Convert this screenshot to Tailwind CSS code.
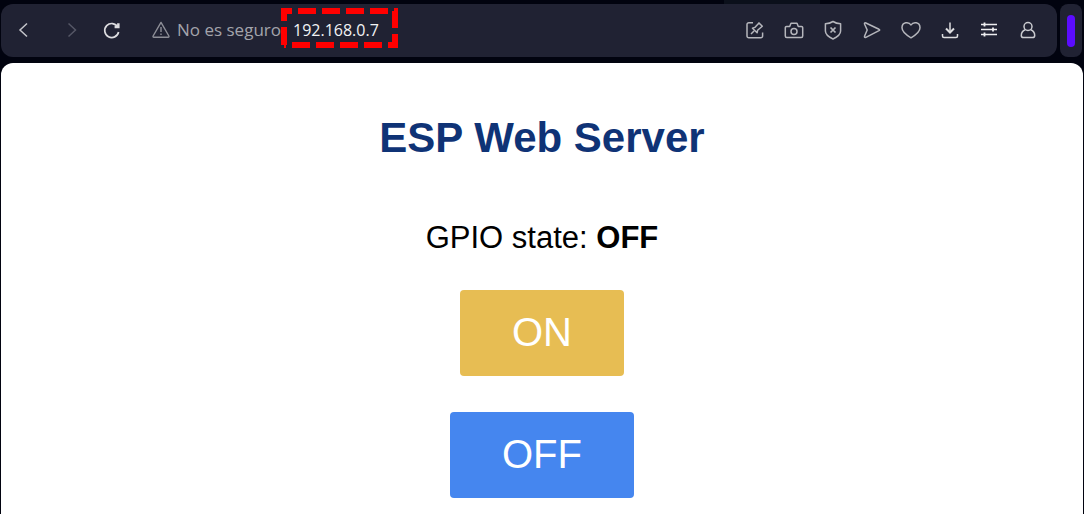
<!DOCTYPE html>
<html lang="es">
<head>
<meta charset="utf-8">
<meta name="viewport" content="width=device-width, initial-scale=1">
<title>ESP Web Server</title>
<script src="https://cdn.jsdelivr.net/npm/@tailwindcss/browser@4"></script>
</head>
<body class="flex min-h-screen flex-col overflow-x-hidden bg-[#01030f]">
<div class="flex h-1 justify-center pl-[460px]"><div class="w-24 bg-[#0b101b]"></div></div>
<header class="flex h-[53px] gap-[3px] pr-0.5 pl-px">
  <div class="flex flex-1 items-center rounded-xl bg-[#202233] pr-2.5 pb-px pl-[7px] text-[#c4c5ca]">
    <nav class="flex items-center" aria-label="Navegación">
      <button aria-label="Atrás" class="grid size-8 place-items-center"><svg class="size-5" viewBox="0 0 20 20" fill="none" stroke="currentColor" stroke-width="1.5"><path d="M13 3.500 6 10l7 6.500"/></svg></button>
      <button aria-label="Adelante" class="ml-4 grid size-8 place-items-center text-[#555766]"><svg class="size-5" viewBox="0 0 20 20" fill="none" stroke="currentColor" stroke-width="1.5"><path d="m6.500 3.500 7 6.500-7 6.500"/></svg></button>
      <button aria-label="Recargar" class="ml-2 grid size-8 place-items-center text-[#dddde0]"><svg class="size-5" viewBox="0 0 20 20" fill="none" stroke="currentColor" stroke-width="1.7"><path d="M15.8 7A7 7 0 1 0 16.6 12"/><path d="M17.6 3.200v5h-5V5.500h2.500V3.200Z" fill="currentColor" stroke="none"/></svg></button>
    </nav>
    <div class="ml-[23px] flex items-center font-['Open_Sans','Noto_Sans',sans-serif]">
      <svg class="size-5 text-[#8d8e97]" viewBox="0 0 20 20" fill="none" stroke="currentColor" stroke-width="1.4" stroke-linejoin="round"><path d="M10 2.4 17.9 16a.8.8 0 0 1-.7 1.2H2.8A.8.8 0 0 1 2.1 16Z"/><path d="M10 7v5m0 1.5V15"/></svg>
      <span class="ml-1.5 text-[17px] leading-6 text-[#a3a4ab]">No es seguro</span>
      <a href="#" class="relative ml-3 text-base leading-6 font-medium text-[#f2f2f4]">192.168.0.7
        <svg class="absolute -top-2.5 -left-3 h-10 w-[117px]" viewBox="0 0 117 40" fill="none" stroke="#ff0000" stroke-width="6" stroke-dasharray="18 6"><path d="M3 37V3H114V37H3"/></svg>
      </a>
    </div>
    <div class="ml-auto flex items-center text-[#b5b6bc]">
      <button aria-label="Notas" class="grid h-8 w-[39px] place-items-center"><svg class="size-5" viewBox="0 0 20 20" fill="none" stroke="currentColor" stroke-width="1.5" stroke-linejoin="round"><path d="M8 2.8H3.8A1.8 1.8 0 0 0 2 4.600V16a1.800 1.800 0 0 0 1.800 1.800h12A1.800 1.800 0 0 0 17.600 16v-3.500M6 14l3-3M7.500 8.200l4.600 4.600.5-2.500 4.700-4-3.300-3.400-4.200 4.500Z"/></svg></button>
      <button aria-label="Captura" class="grid h-8 w-[39px] place-items-center"><svg class="size-5" viewBox="0 0 20 20" fill="none" stroke="currentColor" stroke-width="1.5" stroke-linejoin="round"><path d="M2.500 6.500h3.200L7 3.200h6l1.300 3.300h3.200A1.200 1.200 0 0 1 18.700 7.700V16a1.500 1.500 0 0 1-1.500 1.500H2.800A1.500 1.500 0 0 1 1.300 16V7.700A1.200 1.200 0 0 1 2.500 6.500Z"/><circle cx="10" cy="11.500" r="3"/></svg></button>
      <button aria-label="Protección" class="grid h-8 w-[39px] place-items-center"><svg class="size-5" viewBox="0 0 20 20" fill="none" stroke="currentColor" stroke-width="1.5" stroke-linejoin="round"><path d="M10 1.500c2.300 1.500 4.700 2.100 7.600 2.200V11c0 3.700-3.300 6-7.600 8-4.300-2-7.600-4.300-7.600-8V3.700c2.900-.1 5.300-.7 7.600-2.200Z"/><path d="m7.500 7.500 5 5m0-5-5 5" stroke-width="1.700"/></svg></button>
      <button aria-label="Enviar" class="grid h-8 w-[39px] place-items-center"><svg class="size-5" viewBox="0 0 20 20" fill="none" stroke="currentColor" stroke-width="1.5" stroke-linejoin="round"><path d="M3.900 3 17 9.300q1.300.7 0 1.400L3.900 17.300q-1.900.6-1.300-1.300L5.200 10 2.600 4.300Q2 2.400 3.900 3Z"/></svg></button>
      <button aria-label="Favoritos" class="grid h-8 w-[39px] place-items-center"><svg class="size-5" viewBox="0 0 20 20" fill="none" stroke="currentColor" stroke-width="1.5" stroke-linejoin="round"><path d="M10 5C8 1.500 1 1.600 1 7.800c0 4 4.700 7.500 9 10 4.300-2.500 9-6 9-10C19 1.600 12 1.500 10 5Z"/></svg></button>
      <button aria-label="Descargas" class="grid h-8 w-[39px] place-items-center text-[#dddde0]"><svg class="size-5" viewBox="0 0 20 20" fill="none" stroke="currentColor" stroke-width="1.500"><path d="M2.500 14v2q0 1.500 1.500 1.500h12q1.500 0 1.500-1.500v-2M10 2.500v10"/><path d="m6 8.500 4 4 4-4" stroke-width="2"/></svg></button>
      <button aria-label="Ajustes" class="grid h-8 w-[39px] place-items-center text-[#ededf0]"><svg class="size-5" viewBox="0 0 20 20" fill="none" stroke="currentColor" stroke-width="1.500"><path d="M2 4.500h16M2 9.500h16M2 14.500h16"/><path d="M5.500 2.500v4M14 7.500v4M5.500 12.500v4" stroke-width="1.800"/></svg></button>
      <button aria-label="Perfil" class="grid h-8 w-[39px] place-items-center text-[#c9cacf]"><svg class="size-5" viewBox="0 0 20 20" fill="none" stroke="currentColor" stroke-width="1.500"><circle cx="10" cy="6.500" r="4"/><path d="M7.300 9.800C4.600 10.900 3.300 13 3.300 15.400c0 1.500 1 2.200 2.300 2.200h8.800c1.300 0 2.300-.7 2.300-2.200 0-2.400-1.300-4.500-4-5.600"/></svg></button>
    </div>
  </div>
  <aside class="grid w-[22px] place-items-center rounded-lg bg-[#202233]"><div class="h-8 w-2 rounded-full bg-[#5b0cff]"></div></aside>
</header>
<main class="mx-px mt-1.5 flex flex-1 flex-col items-center rounded-t-xl bg-white font-['Liberation_Sans',Arial,sans-serif]">
  <h1 class="mt-[51px] text-[42px] leading-12 font-bold text-[#0f3376]">ESP Web Server</h1>
  <p class="mt-14 text-[31px] leading-10 text-black">GPIO state: <strong>OFF</strong></p>
  <button class="mt-8 h-[86px] rounded-[4px] bg-[#e7bd53] px-[52px] pb-0.5 text-[40px] leading-12 text-white">ON</button>
  <button class="mt-9 h-[86px] rounded-[4px] bg-[#4586ef] px-[52px] pb-0.5 text-[40px] leading-12 text-white">OFF</button>
</main>
</body>
</html>
